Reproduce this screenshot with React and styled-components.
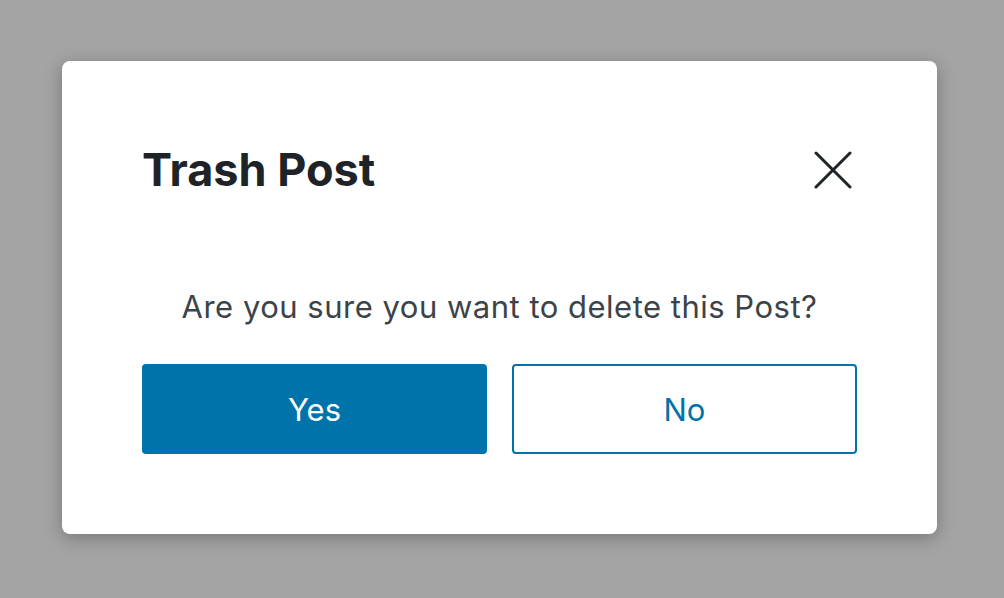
import React from "react";
import styled, { createGlobalStyle } from "styled-components";

const GlobalStyle = createGlobalStyle`
  * { box-sizing: border-box; }
  html, body {
    margin: 0;
    padding: 0;
    background: #a4a4a4;
    font-family: Inter, "Noto Sans", "Liberation Sans", sans-serif;
  }
`;

const Overlay = styled.div`
  width: 1004px;
  height: 598px;
  padding: 61px 0 0 62px;
`;

const Modal = styled.div`
  width: 875px;
  height: 473px;
  background: #fff;
  border-radius: 8px;
  box-shadow: 0 4px 18px rgba(0, 0, 0, 0.28);
  padding: 80px;
  display: flex;
  flex-direction: column;
`;

const Header = styled.div`
  display: flex;
  align-items: center;
  justify-content: space-between;
  height: 60px;
`;

const Title = styled.h1`
  margin: 0;
  font-size: 45px;
  line-height: 56px;
  font-weight: 700;
  color: #1d2327;
  letter-spacing: 0;
`;

const CloseButton = styled.button`
  border: none;
  background: none;
  padding: 0;
  margin-right: 4px;
  width: 40px;
  height: 40px;
  display: flex;
  align-items: center;
  justify-content: center;
  cursor: pointer;
`;

const Message = styled.p`
  margin: 0;
  margin-top: 89px;
  text-align: center;
  font-size: 31px;
  line-height: 38px;
  letter-spacing: 0.5px;
  color: #3c434a;
`;

const Actions = styled.div`
  display: grid;
  grid-template-columns: 1fr 1fr;
  gap: 25px;
  margin-top: 38px;
`;

const Button = styled.button`
  height: 90px;
  border-radius: 4px;
  font-family: inherit;
  font-size: 31px;
  cursor: pointer;
  border: 2px solid #0073aa;
  background: ${(p) => (p.$primary ? "#0073aa" : "#fff")};
  color: ${(p) => (p.$primary ? "#fff" : "#0073aa")};
`;

export default function App() {
  return (
    <>
      <GlobalStyle />
      <Overlay>
        <Modal>
          <Header>
            <Title>Trash Post</Title>
            <CloseButton aria-label="Close">
              <svg width="38" height="38" viewBox="0 0 38 38">
                <path
                  d="M2 2 L36 36 M36 2 L2 36"
                  stroke="#1d2327"
                  strokeWidth="3"
                  strokeLinecap="round"
                />
              </svg>
            </CloseButton>
          </Header>
          <Message>Are you sure you want to delete this Post?</Message>
          <Actions>
            <Button $primary>Yes</Button>
            <Button>No</Button>
          </Actions>
        </Modal>
      </Overlay>
    </>
  );
}
